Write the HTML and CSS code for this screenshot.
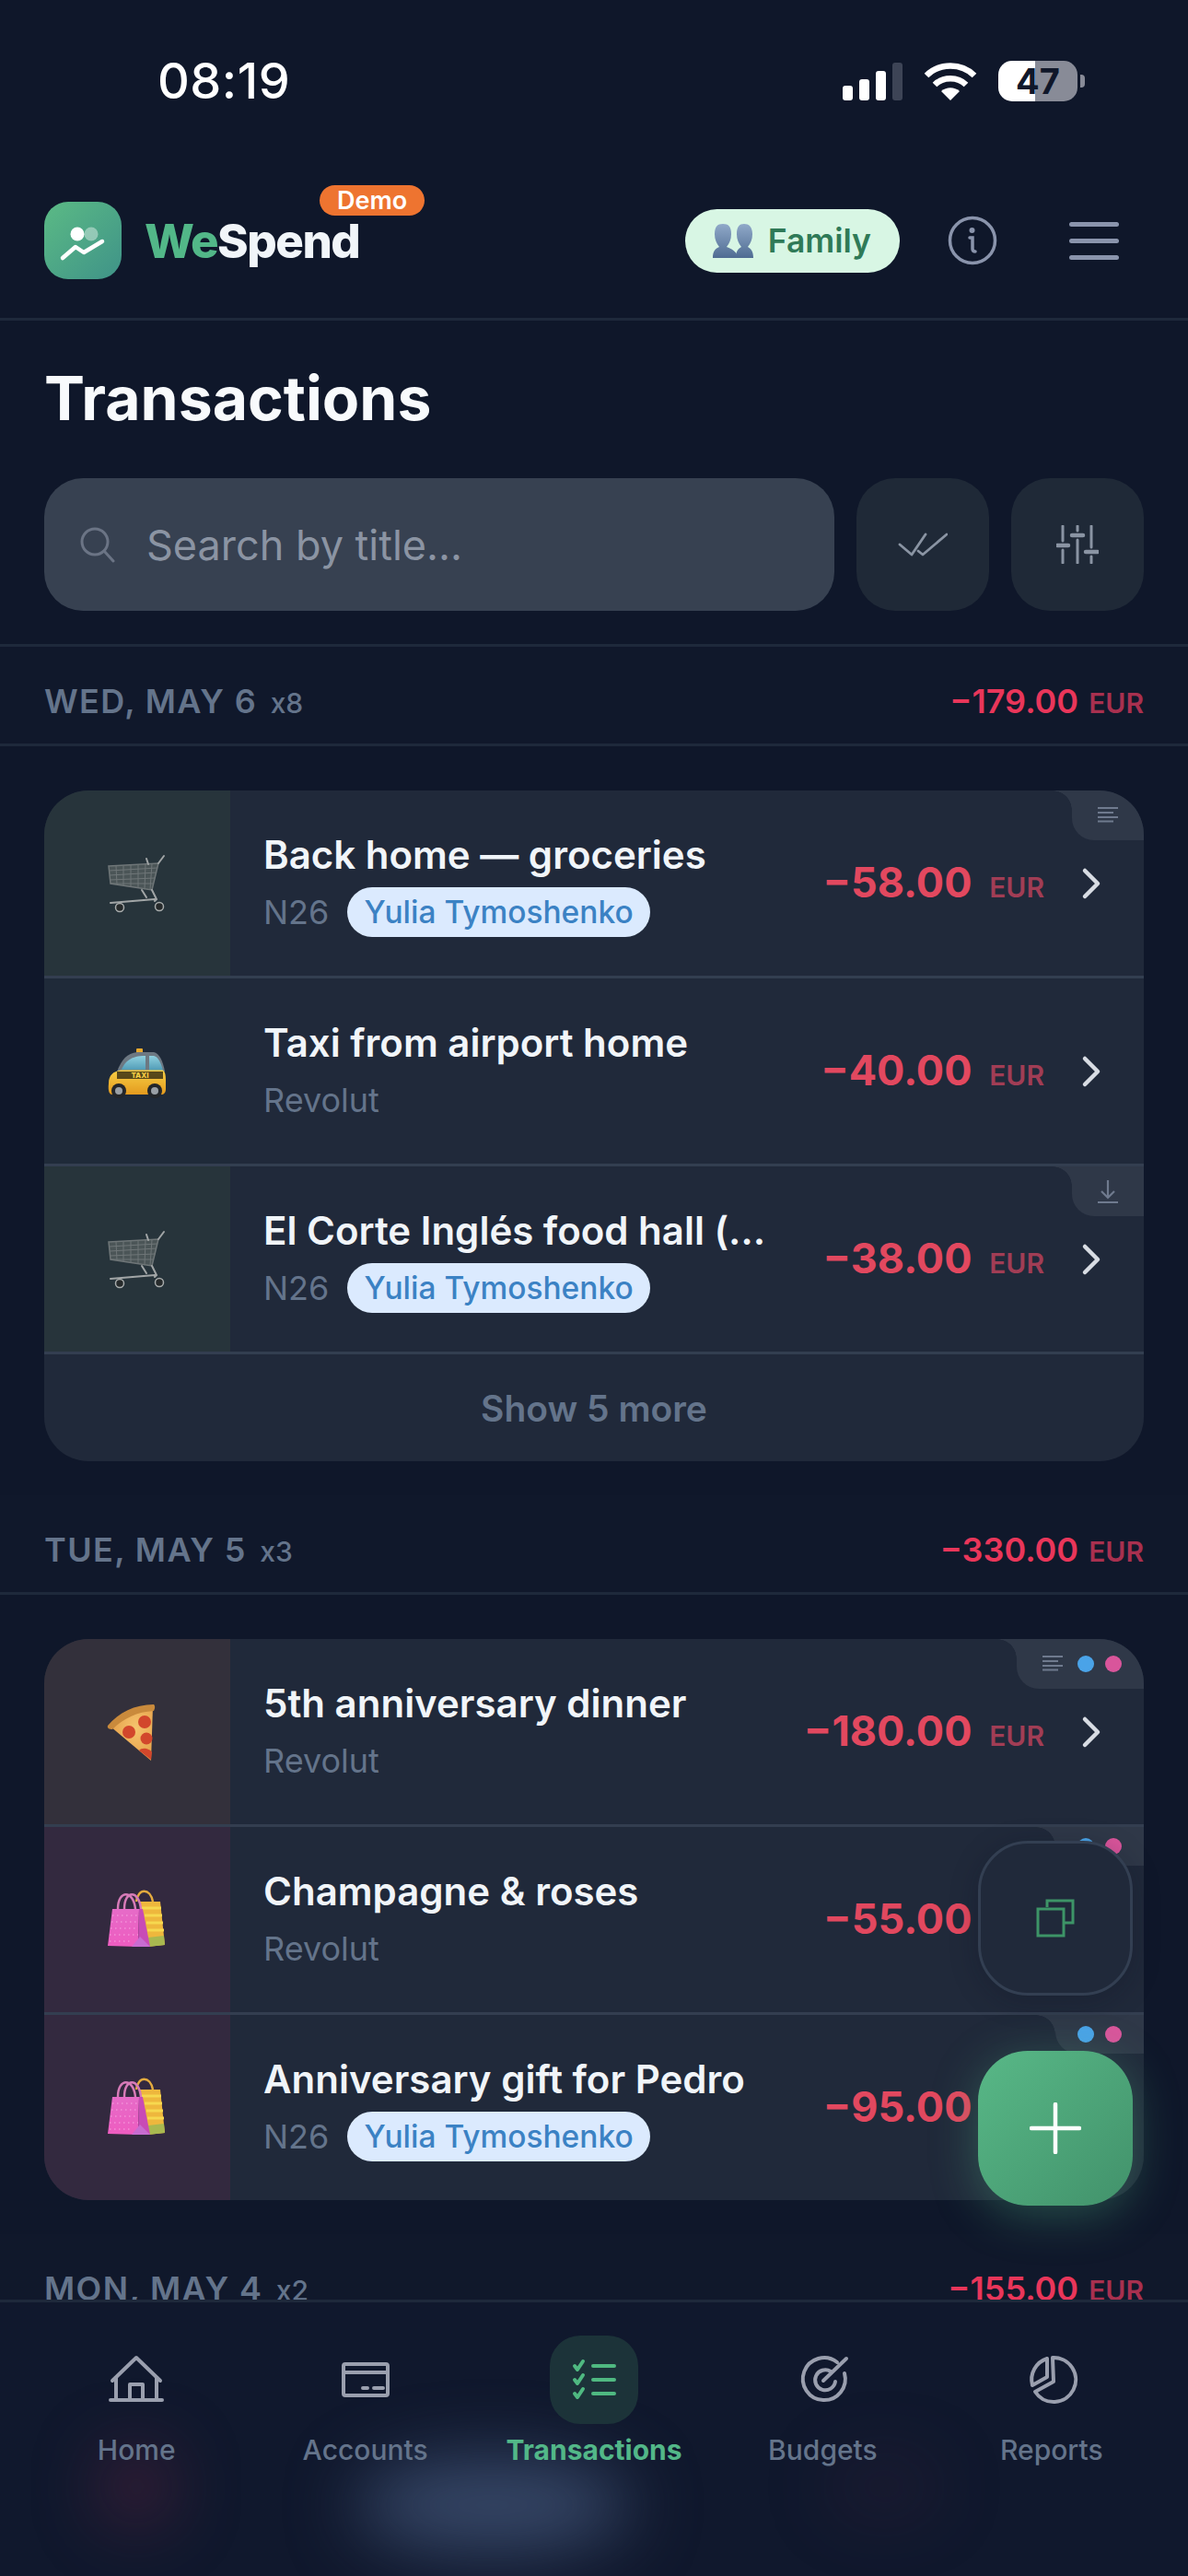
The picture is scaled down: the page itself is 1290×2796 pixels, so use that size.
FILE: index.html
```html
<!DOCTYPE html>
<html lang="en">
  <head>
    <meta charset="UTF-8" />
    <meta name="viewport" content="width=device-width, initial-scale=1.0" />
    <title>WeSpend - Transactions</title>
    <link rel="stylesheet" href="styles.css">
  </head>
  <body>
    <!-- shared drawings for the category emoji -->
    <svg class="sprite" aria-hidden="true">
      <defs>
        <linearGradient id="taxiBody" x1="0" y1="0" x2="0" y2="1">
          <stop offset="0" stop-color="#f8cf45" />
          <stop offset="1" stop-color="#e39a1e" />
        </linearGradient>
        <linearGradient id="taxiGlass" x1="0" y1="0" x2="0" y2="1">
          <stop offset="0" stop-color="#8fd0df" />
          <stop offset="1" stop-color="#4f9ab5" />
        </linearGradient>
        <linearGradient id="pinkBag" x1="0" y1="0" x2="0" y2="1">
          <stop offset="0" stop-color="#e66bc8" />
          <stop offset="1" stop-color="#ee5cc0" />
        </linearGradient>
        <radialGradient id="pizzaBase" cx="0.6" cy="0.4" r="0.7">
          <stop offset="0" stop-color="#f5c46e" />
          <stop offset="1" stop-color="#e49c45" />
        </radialGradient>
      </defs>
      <symbol id="cart" viewBox="0 0 72 72">
        <g fill="none" stroke="#6f7678" stroke-width="1">
          <path d="M5 17 59 14 52 43 7 36Z" fill="#4b5557" stroke-width="1.5" />
          <path d="M13 17 14 37M21 16.500 21 38M29 16 29 39.500M37 15.500 37 40.500M45 15 44 41.500M52 14.500 50 42.500" />
          <path d="M6 22 58 19M6 27 57 24M6 32 55.500 30M7 36 54 36" />
        </g>
        <path d="M59 14 65 6M46 9 48 15M41 43 46 51M52 43 57 53 55 55M7 57 55 53" fill="none" stroke="#a1a5a6" stroke-width="2" stroke-linecap="round" />
        <circle cx="17" cy="62" r="4.500" fill="#262a2b" stroke="#a8acac" stroke-width="1.500" />
        <circle cx="60" cy="61" r="4.500" fill="#262a2b" stroke="#a8acac" stroke-width="1.500" />
      </symbol>
      <symbol id="taxi" viewBox="0 0 72 72">
        <rect x="35" y="11" width="7" height="5" rx="1" fill="#e8a92e" />
        <path d="M14 36C19 23 25 16 36 15H54C60 16 64 25 66 36Z" fill="#6d7882" />
        <path d="M19 34C23 25 29 19 45 19V34ZM49 19H54C59 20 62 27 64 35H49Z" fill="url(#taxiGlass)" />
        <path d="M5 49C5 40 10 36 18 34.500H63C66 35 67 39 67 45V55C67 59 65 61 62 61H9C6 61 4 58 5 49Z" fill="url(#taxiBody)" />
        <rect x="14" y="36" width="50" height="8" fill="#3c3214" opacity="0.85" />
        <text x="39" y="43" text-anchor="middle" font-family="Inter, sans-serif" font-size="8" font-weight="800" fill="#f8cf45">TAXI</text>
        <circle cx="16" cy="57" r="8" fill="#23262a" />
        <circle cx="16" cy="57" r="4" fill="#9aa0a6" />
        <circle cx="55" cy="57" r="8" fill="#23262a" />
        <circle cx="55" cy="57" r="4" fill="#9aa0a6" />
      </symbol>
      <symbol id="pizza" viewBox="0 0 72 72">
        <path d="M7 30C17 18 33 10 53 8L51 67Z" fill="url(#pizzaBase)" />
        <path d="M4 29C16 15 33 6 54 6 56 8 55 11 54 13 36 14 21 21 9 33 6 33 3 32 4 29Z" fill="#c98a3c" />
        <circle cx="44" cy="25" r="7" fill="#d2472c" />
        <circle cx="27" cy="36" r="7" fill="#d2472c" />
        <circle cx="46" cy="43" r="6.500" fill="#d2472c" />
        <path d="M38 56C41 52 50 54 52 58L51 66Z" fill="#d2472c" />
      </symbol>
      <symbol id="bags" viewBox="0 0 72 72">
        <path d="M35 16C37 1 50 1 53 16" fill="none" stroke="#e4ab3e" stroke-width="2.500" />
        <path d="M38 16H61L66 63 47 65Z" fill="#eeb73d" />
        <path d="M40 23H62M44 31H63M46 39H64M47 47H65" stroke="#f6d84f" stroke-width="3" />
        <path d="M48 55 65 53 66 63 48 65Z" fill="#a9b850" />
        <path d="M15 24C15 3 32 3 34 24M22 24C22 3 38 3 40 24" fill="none" stroke="#d77bb8" stroke-width="2.500" />
        <path d="M9 24H38L37 65 4 64Z" fill="url(#pinkBag)" />
        <path d="M9 31H37M8 38H37M7 45H37M6 52H37M6 59H30" stroke="#f7a8e2" stroke-width="1.200" stroke-dasharray="1.500 3.500" />
        <path d="M38 24H42L50 65H37Z" fill="#c84bb6" />
        <path d="M30 65 39 54 50 65Z" fill="#c86cd0" />
      </symbol>
    </svg>

    <div class="phone">
      <div class="status-bar">
        <span class="status-time">08:19</span>
        <div class="status-icons">
          <div class="signal">
            <span class="bar bar-1"></span>
            <span class="bar bar-2"></span>
            <span class="bar bar-3"></span>
            <span class="bar bar-4"></span>
          </div>
          <svg class="wifi" width="58" height="42" viewBox="0 0 58 42">
            <path d="M3 15C17 1 41 1 55 15" fill="none" stroke="#fff" stroke-width="6.500" />
            <path d="M12 25C21 16 37 16 46 25" fill="none" stroke="#fff" stroke-width="6.500" />
            <path d="M29 42 19 32C25 27 33 27 39 32Z" fill="#fff" />
          </svg>
          <div class="battery"><span>47</span></div>
        </div>
      </div>

      <header class="app-header">
        <div class="brand">
          <svg class="brand-icon" width="84" height="84" viewBox="0 0 84 84">
            <defs>
              <linearGradient id="logoBg" x1="0" y1="0" x2="1" y2="1">
                <stop offset="0" stop-color="#5bba85" />
                <stop offset="1" stop-color="#3f9388" />
              </linearGradient>
            </defs>
            <rect width="84" height="84" rx="26" fill="url(#logoBg)" />
            <ellipse cx="51" cy="35" rx="7.500" ry="7.500" fill="#fff" opacity="0.4" />
            <ellipse cx="36" cy="35" rx="7.500" ry="7.500" fill="#fff" />
            <path d="M20 61 34 49 43 55 63 43" fill="none" stroke="#fff" stroke-width="4.500" stroke-linecap="round" stroke-linejoin="round" />
          </svg>
          <span class="brand-name"><em>We</em>Spend</span>
          <span class="demo-badge">Demo</span>
        </div>
        <div class="header-actions">
          <div class="family-pill">
            <svg width="44" height="37" viewBox="0 0 44 37">
              <defs>
                <linearGradient id="bust" x1="0" y1="0" x2="0" y2="1">
                  <stop offset="0" stop-color="#90a9c9" />
                  <stop offset="1" stop-color="#4f6c92" />
                </linearGradient>
              </defs>
              <path d="M25 37C25 29 28 27 31 25 28 21 26 17 26 11 26 3 29 0 34 0 39 0 43 3 43 11 43 17 41 21 38 25 41 27 44 29 44 37Z" fill="url(#bust)" />
              <path d="M0 37C0 29 3 27 7 25 4 21 2 17 2 11 2 3 5 0 11 0 17 0 20 3 20 11 20 17 18 21 15 25 20 27 27 30 27 37Z" fill="url(#bust)" />
            </svg>
            <span>Family</span>
          </div>
          <svg class="info-icon" width="54" height="54" viewBox="0 0 54 54">
            <circle cx="27" cy="27" r="24.500" fill="none" stroke="#8a94ac" stroke-width="3.500" />
            <circle cx="26.500" cy="16" r="3" fill="#8a94ac" />
            <path d="M24 24H27V36C27 38 28 39 30 39" fill="none" stroke="#8a94ac" stroke-width="3.500" stroke-linecap="round" />
          </svg>
          <div class="menu-icon">
            <span></span>
            <span></span>
            <span></span>
          </div>
        </div>
      </header>

      <h1 class="page-title">Transactions</h1>

      <div class="toolbar">
        <div class="search">
          <svg width="40" height="40" viewBox="0 0 40 40">
            <circle cx="17" cy="17" r="14" fill="none" stroke="#6b7485" stroke-width="3" />
            <path d="M27 27 37 38" stroke="#6b7485" stroke-width="3" stroke-linecap="round" />
          </svg>
          <span class="search-placeholder">Search by title...</span>
        </div>
        <div class="tool-btn">
          <svg width="54" height="26" viewBox="0 0 54 26">
            <path d="M2 13 15 24 30 2M22 20 27 24 53 2" fill="none" stroke="#8a94a3" stroke-width="2.800" stroke-linecap="round" stroke-linejoin="round" />
          </svg>
        </div>
        <div class="tool-btn">
          <svg width="46" height="42" viewBox="0 0 46 42">
            <path d="M7 1V17M7 27V41M23 1V6M23 16V41M38 1V24M38 34V41" stroke="#8a94a3" stroke-width="3" stroke-linecap="round" />
            <path d="M1 22H13M17 11H29M32 29H45" stroke="#8a94a3" stroke-width="4.500" stroke-linecap="round" />
          </svg>
        </div>
      </div>

      <main class="tx-list">
        <div class="day-head">
          <span class="day-label">WED, MAY 6 <small>x8</small></span>
          <span class="day-total">−179.00 <small>EUR</small></span>
        </div>
        <section class="card">
          <div class="tx-row">
            <div class="tx-emoji tint-green"><svg width="72" height="72"><use href="#cart" /></svg></div>
            <div class="tx-body">
              <div class="tx-title">Back home — groceries</div>
              <div class="tx-sub">N26 <span class="person">Yulia Tymoshenko</span></div>
            </div>
            <div class="tx-amount">−58.00 <small>EUR</small></div>
            <svg class="chevron" width="36" height="36" viewBox="0 0 36 36"><path d="M11 4 25 18 11 32" /></svg>
            <div class="tx-tab">
              <svg class="note-icon" width="30" height="30" viewBox="0 0 30 30"><path d="M4 7H26M4 12H21M4 17H26M4 21.500H21" /></svg>
            </div>
          </div>
          <div class="tx-row">
            <div class="tx-emoji tint-none"><svg width="72" height="72"><use href="#taxi" /></svg></div>
            <div class="tx-body">
              <div class="tx-title">Taxi from airport home</div>
              <div class="tx-sub">Revolut</div>
            </div>
            <div class="tx-amount">−40.00 <small>EUR</small></div>
            <svg class="chevron" width="36" height="36" viewBox="0 0 36 36"><path d="M11 4 25 18 11 32" /></svg>
          </div>
          <div class="tx-row">
            <div class="tx-emoji tint-green"><svg width="72" height="72"><use href="#cart" /></svg></div>
            <div class="tx-body">
              <div class="tx-title">El Corte Inglés food hall (groceries)</div>
              <div class="tx-sub">N26 <span class="person">Yulia Tymoshenko</span></div>
            </div>
            <div class="tx-amount">−38.00 <small>EUR</small></div>
            <svg class="chevron" width="36" height="36" viewBox="0 0 36 36"><path d="M11 4 25 18 11 32" /></svg>
            <div class="tx-tab">
              <svg class="note-icon" width="30" height="30" viewBox="0 0 30 30"><path d="M15 3V22M8 15 15 22 22 15M4 27H26" /></svg>
            </div>
          </div>
          <div class="show-more">Show 5 more</div>
        </section>

        <div class="day-head">
          <span class="day-label">TUE, MAY 5 <small>x3</small></span>
          <span class="day-total">−330.00 <small>EUR</small></span>
        </div>
        <section class="card">
          <div class="tx-row">
            <div class="tx-emoji tint-orange"><svg width="72" height="72"><use href="#pizza" /></svg></div>
            <div class="tx-body">
              <div class="tx-title">5th anniversary dinner</div>
              <div class="tx-sub">Revolut</div>
            </div>
            <div class="tx-amount">−180.00 <small>EUR</small></div>
            <svg class="chevron" width="36" height="36" viewBox="0 0 36 36"><path d="M11 4 25 18 11 32" /></svg>
            <div class="tx-tab">
              <svg class="note-icon" width="30" height="30" viewBox="0 0 30 30"><path d="M4 7H26M4 12H21M4 17H26M4 21.500H21" /></svg>
              <span class="dot dot-blue"></span>
              <span class="dot dot-pink"></span>
            </div>
          </div>
          <div class="tx-row">
            <div class="tx-emoji tint-purple"><svg width="72" height="72"><use href="#bags" /></svg></div>
            <div class="tx-body">
              <div class="tx-title">Champagne &amp; roses</div>
              <div class="tx-sub">Revolut</div>
            </div>
            <div class="tx-amount">−55.00 <small>EUR</small></div>
            <svg class="chevron" width="36" height="36" viewBox="0 0 36 36"><path d="M11 4 25 18 11 32" /></svg>
            <div class="tx-tab">
              <span class="dot dot-blue"></span>
              <span class="dot dot-pink"></span>
            </div>
          </div>
          <div class="tx-row">
            <div class="tx-emoji tint-purple"><svg width="72" height="72"><use href="#bags" /></svg></div>
            <div class="tx-body">
              <div class="tx-title">Anniversary gift for Pedro</div>
              <div class="tx-sub">N26 <span class="person">Yulia Tymoshenko</span></div>
            </div>
            <div class="tx-amount">−95.00 <small>EUR</small></div>
            <svg class="chevron" width="36" height="36" viewBox="0 0 36 36"><path d="M11 4 25 18 11 32" /></svg>
            <div class="tx-tab">
              <span class="dot dot-blue"></span>
              <span class="dot dot-pink"></span>
            </div>
          </div>
        </section>

        <div class="day-head">
          <span class="day-label">MON, MAY 4 <small>x2</small></span>
          <span class="day-total">−155.00 <small>EUR</small></span>
        </div>
      </main>

      <nav class="bottom-nav">
        <span class="glow glow-red"></span>
        <span class="glow glow-blue"></span>
        <span class="glow glow-wine"></span>
        <a class="nav-item">
          <span class="nav-icon">
            <svg width="72" height="72" viewBox="0 0 72 72"><path d="M10 37 36 12 62 37M14 34V57M58 34V57M8 58H64M29 57V41H43V57" /></svg>
          </span>
          Home
        </a>
        <a class="nav-item">
          <span class="nav-icon">
            <svg width="72" height="72" viewBox="0 0 72 72"><rect x="12" y="19" width="48" height="34" rx="2" /><path d="M12 28H60M33 45H38M45 45H55" /></svg>
          </span>
          Accounts
        </a>
        <a class="nav-item active">
          <span class="nav-icon">
            <svg width="72" height="72" viewBox="0 0 72 72"><path d="M15 21 18 25 24 16M15 36 18 40 24 31M15 51 18 55 24 46M35 21H58M35 36H58M35 51H58" /></svg>
          </span>
          Transactions
        </a>
        <a class="nav-item">
          <span class="nav-icon">
            <svg width="72" height="72" viewBox="0 0 72 72"><path d="M52 17A23 23 0 1 0 60 29M45 27A11 11 0 1 0 50 38M37 37 62 13" /></svg>
          </span>
          Budgets
        </a>
        <a class="nav-item">
          <span class="nav-icon">
            <svg width="72" height="72" viewBox="0 0 72 72"><path d="M37 12A24 24 0 1 1 18 49L38 38ZM31 13V33L15 42A24 24 0 0 1 31 13Z" /></svg>
          </span>
          Reports
        </a>
      </nav>

      <div class="fab fab-copy">
        <svg width="42" height="42" viewBox="0 0 42 42">
          <path d="M12 9V2H40V26H30M2 11H30V40H2Z" fill="none" stroke="#3d9467" stroke-width="3" />
        </svg>
      </div>
      <div class="fab fab-add">
        <svg width="56" height="56" viewBox="0 0 56 56">
          <path d="M28 2V54M2 28H54" stroke="#fff" stroke-width="4.500" stroke-linecap="round" />
        </svg>
      </div>
    </div>
  </body>
</html>
```

FILE: styles.css
```css
* {
  box-sizing: border-box;
}
body {
  margin: 0;
  background-color: #0f172a;
  font-family: Inter, "Liberation Sans", sans-serif;
}
.sprite {
  position: absolute;
  width: 0;
  height: 0;
}
.phone {
  position: relative;
  display: flex;
  flex-direction: column;
  width: 1290px;
  height: 2796px;
  overflow: hidden;
  background-color: #0f172a;
}

/* status bar */
.status-bar {
  display: flex;
  justify-content: space-between;
  align-items: center;
  height: 177px;
  padding: 0 120px 3px 171px;
  flex-shrink: 0;
}
.status-time {
  color: #fff;
  font-size: 54px;
  font-weight: 500;
  letter-spacing: 0.5px;
}
.status-icons {
  display: flex;
  align-items: flex-end;
  gap: 23px;
}
.signal {
  display: flex;
  align-items: flex-end;
  gap: 7px;
}
.bar {
  width: 11px;
  border-radius: 3px;
  background-color: #fff;
}
.bar-1 {
  height: 16px;
}
.bar-2 {
  height: 23px;
}
.bar-3 {
  height: 32px;
}
.bar-4 {
  height: 41px;
  background-color: #3d4456;
}
.battery {
  position: relative;
  width: 86px;
  height: 44px;
  margin-bottom: -1px;
  border-radius: 15px;
  background: linear-gradient(90deg, #fff 46.500%, #888b97 46.500%);
  color: #10172a;
  font-size: 38px;
  font-weight: 700;
  line-height: 44px;
  text-align: center;
}
.battery::after {
  content: "";
  position: absolute;
  right: -8px;
  top: 15px;
  width: 5px;
  height: 14px;
  border-radius: 0 4px 4px 0;
  background-color: #888b97;
}

/* app header */
.app-header {
  display: flex;
  justify-content: space-between;
  align-items: center;
  height: 171px;
  padding: 0 75px 0 48px;
  border-bottom: 3px solid #1e293b;
  flex-shrink: 0;
}
.brand {
  position: relative;
  display: flex;
  align-items: center;
  gap: 25px;
}
.brand-name {
  color: #f1f5f9;
  font-size: 51px;
  font-weight: 800;
  letter-spacing: -1.500px;
}
.brand-name em {
  color: #52b788;
  font-style: normal;
}
.demo-badge {
  position: absolute;
  left: 299px;
  top: -18px;
  padding: 0 19px;
  height: 33px;
  border-radius: 17px;
  background-color: #ee7430;
  color: #fff;
  font-size: 27px;
  font-weight: 600;
  line-height: 33px;
}
.header-actions {
  display: flex;
  align-items: center;
}
.family-pill {
  display: flex;
  align-items: center;
  gap: 16px;
  height: 69px;
  padding: 0 31px 0 30px;
  border-radius: 35px;
  background-color: #d8f6e4;
  color: #2f7a57;
  font-size: 35.500px;
  font-weight: 600;
}
.info-icon {
  margin-left: 52px;
}
.menu-icon {
  display: flex;
  flex-direction: column;
  gap: 13px;
  width: 54px;
  margin-left: 78px;
}
.menu-icon span {
  height: 5px;
  border-radius: 3px;
  background-color: #8a94ac;
}

/* title and search */
.page-title {
  margin: 45px 48px 48px;
  color: #f8fafc;
  font-size: 66px;
  font-weight: 700;
  line-height: 78px;
  flex-shrink: 0;
}
.toolbar {
  display: flex;
  gap: 24px;
  padding: 0 48px 36px;
  border-bottom: 3px solid #1e293b;
  flex-shrink: 0;
}
.search {
  display: flex;
  align-items: center;
  flex: 1;
  gap: 33px;
  height: 144px;
  padding-left: 38px;
  border-radius: 42px;
  background-color: #374151;
}
.search-placeholder {
  color: #8b94a3;
  font-size: 45px;
}
.tool-btn {
  display: flex;
  justify-content: center;
  align-items: center;
  width: 144px;
  height: 144px;
  border-radius: 42px;
  background-color: #1f2937;
}

/* list */
.tx-list {
  flex: 1;
  min-height: 0;
  overflow: hidden;
}
.day-head {
  display: flex;
  justify-content: space-between;
  align-items: center;
  height: 108px;
  padding: 13px 48px 0;
  border-bottom: 3px solid #1e293b;
  background-color: #10182b;
  font-size: 36px;
  font-weight: 600;
}
.day-label {
  color: #64748b;
  letter-spacing: 1.400px;
}
.day-label small {
  margin-left: 4px;
  font-size: 30px;
  font-weight: 500;
  letter-spacing: 0;
}
.day-total {
  color: #e9365a;
}
.day-total small {
  margin-left: 2px;
  color: #a8304f;
  font-size: 30px;
}
.card {
  margin: 48px 48px 37px;
  border-radius: 48px;
  background-color: #20293a;
  overflow: hidden;
}
.tx-row {
  position: relative;
  display: flex;
  align-items: center;
  height: 204px;
  border-bottom: 3px solid #333e50;
}
.card > .tx-row:last-child {
  height: 201px;
  border-bottom: none;
}
.tx-emoji {
  display: flex;
  justify-content: center;
  align-items: center;
  align-self: stretch;
  width: 202px;
  flex-shrink: 0;
}
.tint-green {
  background-color: #27343b;
}
.tint-none {
  background-color: #1f2a39;
}
.tint-orange {
  background-color: #33303b;
}
.tint-purple {
  background-color: #33293f;
}
.tx-body {
  flex: 1;
  min-width: 0;
  padding: 0 55px 0 36px;
}
.tx-title {
  overflow: hidden;
  color: #f1f5f9;
  font-size: 42px;
  font-weight: 600;
  line-height: 54px;
  white-space: nowrap;
  text-overflow: ellipsis;
}
.tx-sub {
  display: flex;
  align-items: center;
  gap: 20px;
  height: 54px;
  margin-top: 8px;
  color: #64748b;
  font-size: 36px;
}
.person {
  height: 54px;
  padding: 0 18px;
  border-radius: 27px;
  background-color: #dbeafe;
  color: #3b82c4;
  font-size: 33.500px;
  font-weight: 500;
  line-height: 54px;
}
.tx-amount {
  margin-top: -2px;
  color: #e2485f;
  font-size: 45px;
  font-weight: 700;
  white-space: nowrap;
}
.tx-amount small {
  margin-left: 8px;
  color: #a13d55;
  font-size: 30px;
  font-weight: 600;
}
.chevron {
  margin: 0 39px 0 33px;
  flex-shrink: 0;
}
.chevron path {
  fill: none;
  stroke: #d8dce3;
  stroke-width: 4.500;
  stroke-linecap: round;
  stroke-linejoin: round;
}

/* corner tab on a row */
.tx-tab {
  position: absolute;
  top: 0;
  right: 0;
  display: flex;
  align-items: center;
  gap: 12px;
  padding: 12px 24px;
  border-bottom-left-radius: 24px;
  background-color: #2f3848;
}
.tx-tab::before {
  content: "";
  position: absolute;
  top: 0;
  left: -21px;
  width: 21px;
  height: 21px;
  background: radial-gradient(circle at 0 100%, transparent 20.500px, #2f3848 21px);
}
.note-icon path {
  fill: none;
  stroke: #6f7a8e;
  stroke-width: 2.200;
}
.dot {
  width: 18px;
  height: 18px;
  border-radius: 50%;
}
.dot-blue {
  background-color: #4aa3e8;
}
.dot-pink {
  background-color: #d9559b;
}
.show-more {
  display: flex;
  justify-content: center;
  align-items: center;
  height: 116px;
  color: #64748b;
  font-size: 39px;
  font-weight: 600;
}

/* bottom navigation */
.bottom-nav {
  position: relative;
  display: flex;
  height: 300px;
  padding: 36px 24px 0;
  overflow: hidden;
  border-top: 3px solid #1e293b;
  background-color: #10182d;
  flex-shrink: 0;
}
.glow {
  position: absolute;
  border-radius: 50%;
  filter: blur(38px);
}
.glow-red {
  left: 110px;
  top: 160px;
  width: 76px;
  height: 80px;
  background-color: rgba(125, 40, 70, 0.45);
}
.glow-blue {
  left: 385px;
  top: 170px;
  width: 300px;
  height: 100px;
  background-color: rgba(70, 90, 125, 0.75);
}
.glow-wine {
  left: 900px;
  top: 170px;
  width: 120px;
  height: 60px;
  background-color: rgba(90, 40, 70, 0.2);
}
.nav-item {
  position: relative;
  display: flex;
  flex-direction: column;
  align-items: center;
  flex: 1;
  gap: 10px;
  color: #64748b;
  font-size: 30px;
  font-weight: 500;
  line-height: 36px;
}
.nav-icon {
  display: flex;
  justify-content: center;
  align-items: center;
  width: 96px;
  height: 96px;
  border-radius: 33px;
}
.nav-icon svg path,
.nav-icon svg rect {
  fill: none;
  stroke: #9a9fae;
  stroke-width: 4;
  stroke-linecap: round;
  stroke-linejoin: round;
}
.nav-item.active {
  color: #52b788;
  font-weight: 700;
}
.nav-item.active .nav-icon {
  background-color: #1c3339;
}
.nav-item.active .nav-icon svg path {
  stroke: #4fb981;
}

/* floating buttons */
.fab {
  position: absolute;
  left: 1062px;
  display: flex;
  justify-content: center;
  align-items: center;
  width: 168px;
  height: 168px;
  border-radius: 54px;
}
.fab-copy {
  top: 1998px;
  border: 3px solid #333f52;
  background-color: #20293a;
  box-shadow: 0 6px 30px rgba(10, 15, 30, 0.25);
}
.fab-add {
  top: 2226px;
  background: linear-gradient(135deg, #58b887, #42926b);
  box-shadow: 0 10px 50px rgba(82, 183, 136, 0.35);
}
```
